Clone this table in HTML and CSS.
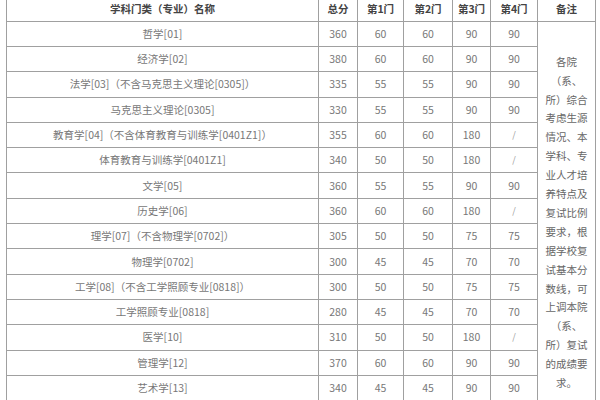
FILE: index.html
```html
<!DOCTYPE html>
<html lang="zh-CN">
<head>
<meta charset="utf-8">
<title>复试基本分数线</title>
<link rel="stylesheet" href="styles.css">
</head>
<body>
<table class="score-table">
  <colgroup>
    <col class="c-name">
    <col class="c-total">
    <col class="c-s1">
    <col class="c-s2">
    <col class="c-s3">
    <col class="c-s4">
    <col class="c-note">
  </colgroup>
  <thead>
    <tr>
      <th>学科门类（专业）名称</th>
      <th>总分</th>
      <th>第1门</th>
      <th>第2门</th>
      <th>第3门</th>
      <th>第4门</th>
      <th>备注</th>
    </tr>
  </thead>
  <tbody>
    <tr><td>哲学[01]</td><td>360</td><td>60</td><td>60</td><td>90</td><td>90</td>
      <td class="note" rowspan="15">各院（系、所）综合考虑生源情况、本学科、专业人才培养特点及复试比例要求，根据学校复试基本分数线，可上调本院（系、所）复试的成绩要求。</td></tr>
    <tr><td>经济学[02]</td><td>380</td><td>60</td><td>60</td><td>90</td><td>90</td></tr>
    <tr><td>法学[03]（不含马克思主义理论[0305]）</td><td>335</td><td>55</td><td>55</td><td>90</td><td>90</td></tr>
    <tr><td>马克思主义理论[0305]</td><td>330</td><td>55</td><td>55</td><td>90</td><td>90</td></tr>
    <tr><td>教育学[04]（不含体育教育与训练学[0401Z1]）</td><td>355</td><td>60</td><td>60</td><td>180</td><td class="na">/</td></tr>
    <tr><td>体育教育与训练学[0401Z1]</td><td>340</td><td>50</td><td>50</td><td>180</td><td class="na">/</td></tr>
    <tr><td>文学[05]</td><td>360</td><td>55</td><td>55</td><td>90</td><td>90</td></tr>
    <tr><td>历史学[06]</td><td>360</td><td>60</td><td>60</td><td>180</td><td class="na">/</td></tr>
    <tr><td>理学[07]（不含物理学[0702]）</td><td>305</td><td>50</td><td>50</td><td>75</td><td>75</td></tr>
    <tr><td>物理学[0702]</td><td>300</td><td>45</td><td>45</td><td>70</td><td>70</td></tr>
    <tr><td>工学[08]（不含工学照顾专业[0818]）</td><td>300</td><td>50</td><td>50</td><td>75</td><td>75</td></tr>
    <tr><td>工学照顾专业[0818]</td><td>280</td><td>45</td><td>45</td><td>70</td><td>70</td></tr>
    <tr><td>医学[10]</td><td>310</td><td>50</td><td>50</td><td>180</td><td class="na">/</td></tr>
    <tr><td>管理学[12]</td><td>370</td><td>60</td><td>60</td><td>90</td><td>90</td></tr>
    <tr><td>艺术学[13]</td><td>340</td><td>45</td><td>45</td><td>90</td><td>90</td></tr>
  </tbody>
</table>
</body>
</html>
```
FILE: styles.css
```css
html, body {
  margin: 0;
  padding: 0;
  background: #ffffff;
}
body {
  font-family: "Noto Sans CJK SC", "Noto Sans", sans-serif;
  overflow: hidden;
}
.score-table {
  margin: -4.6px 0 0 6px;
  width: 589px;
  table-layout: fixed;
  border-collapse: collapse;
  font-size: 10.5px;
  color: #777777;
}
.c-name { width: 312px; }
.c-total { width: 39px; }
.c-s1 { width: 46px; }
.c-s2 { width: 49px; }
.c-s3 { width: 38px; }
.c-s4 { width: 47px; }
.c-note { width: 58px; }
.score-table th,
.score-table td {
  border: 1px solid #a0a0a0;
  height: 25.3px;
  padding: 0;
  text-align: center;
  vertical-align: middle;
  line-height: 14px;
  box-sizing: border-box;
}
.score-table th {
  font-weight: bold;
  color: #444444;
}
.score-table td.na {
  font-size: 9px;
  color: #999999;
}
.score-table td.note {
  vertical-align: top;
  padding: 31px 6px 0;
  line-height: 18.9px;
  word-break: break-all;
  color: #666666;
}
```
